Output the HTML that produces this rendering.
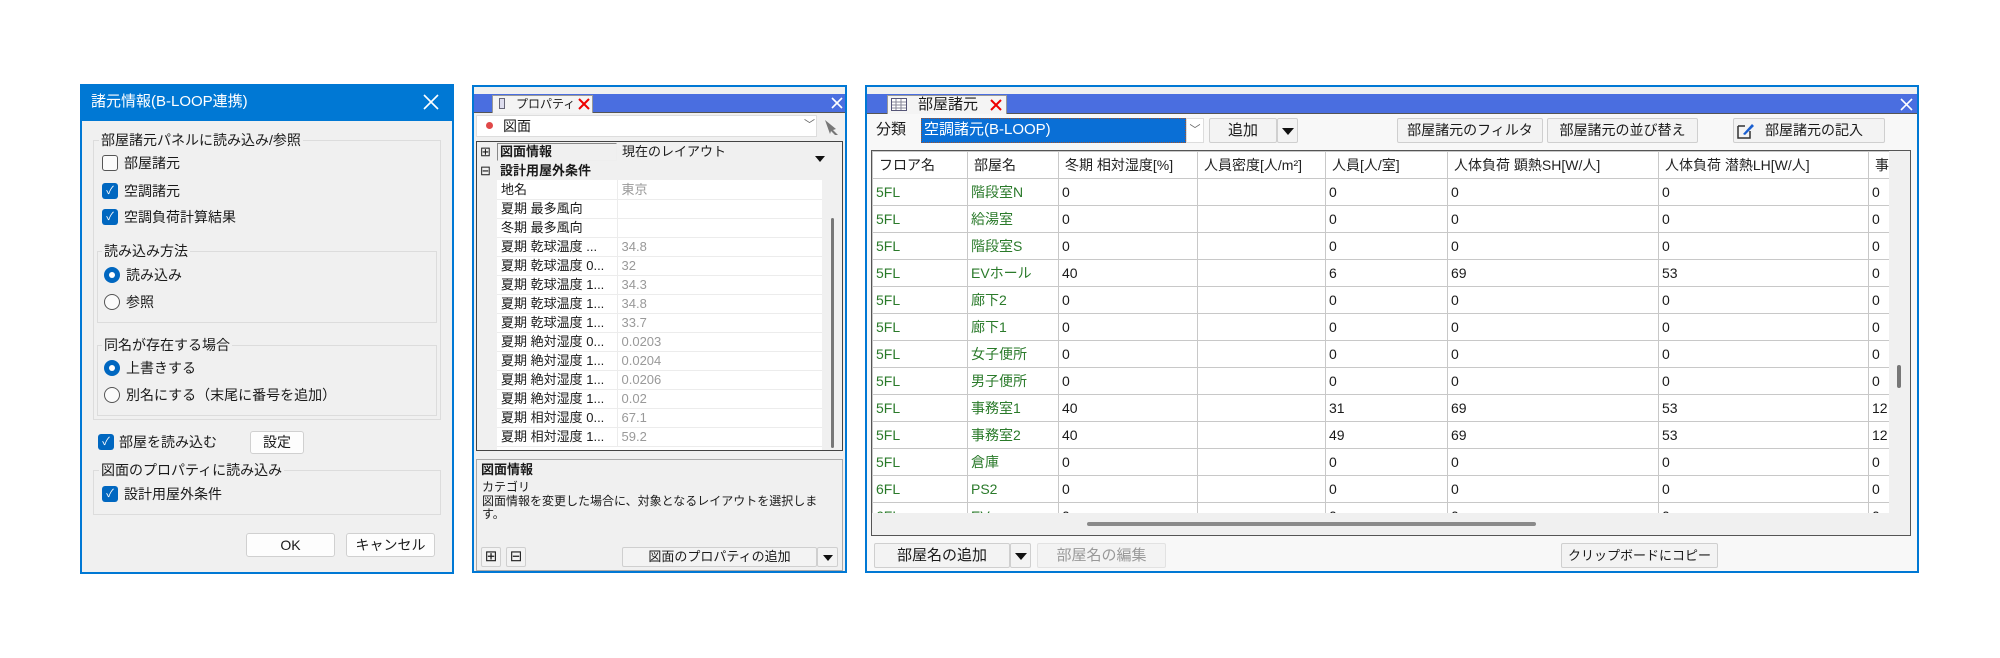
<!DOCTYPE html>
<html><head><meta charset="utf-8"><style>
*{box-sizing:border-box;margin:0;padding:0}
body{width:2000px;height:658px;background:#fff;position:relative;overflow:hidden;font-family:"Liberation Sans","Noto Sans CJK JP",sans-serif;color:#1a1a1a}
.a{position:absolute}
.t{position:absolute;white-space:nowrap;font-size:14px;line-height:16px}
.cb{position:absolute;width:16px;height:16px;border-radius:3px;background:#0067c0;color:#fff;font-size:11px;line-height:16px;text-align:center}
.cbo{position:absolute;width:16px;height:16px;border-radius:3px;border:1px solid #555;background:#fbfbfb}
.rd{position:absolute;width:16px;height:16px;border-radius:50%;background:#0067c0}
.rd::after{content:"";position:absolute;left:5px;top:5px;width:6px;height:6px;border-radius:50%;background:#fff}
.ro{position:absolute;width:16px;height:16px;border-radius:50%;border:1px solid #555;background:#fbfbfb}
.gb{position:absolute;border:1px solid #dcdcdc}
.lbl{position:absolute;background:#f0f0f0;padding:0 2px;font-size:14px;line-height:16px;white-space:nowrap}
.btn{position:absolute;border:1px solid #d0d0d0;background:#fdfdfd;border-radius:3px;font-size:14px;text-align:center;white-space:nowrap}
.wb{position:absolute;border:1px solid #cfcfcf;background:#f3f3f3;border-radius:2px;font-size:14px;text-align:center;white-space:nowrap}
.tri{display:inline-block;width:0;height:0;border-left:6px solid transparent;border-right:6px solid transparent;border-top:7px solid #111}
table{border-collapse:collapse;table-layout:fixed}
.g td{height:27px;border:1px solid #c8c8c8;font-size:14px;padding:0 0 0 3px;white-space:nowrap;overflow:hidden;background:#fff}
.g tr.h td{color:#222;padding-left:6px}
.g td.gr{color:#2a7a2a}
.p td{height:19px;font-size:13px;line-height:15px;padding:0 0 0 4px;white-space:nowrap;overflow:hidden;border-bottom:1px solid #ececec}
</style></head><body>

<!-- Panel 1 -->
<div class="a" style="left:80px;top:84px;width:374px;height:490px;background:#f0f0f0;border:2px solid #0078d4"></div>
<div class="a" style="left:80px;top:84px;width:374px;height:37px;background:#0078d4"></div>
<div class="t" style="left:91px;top:94px;color:#fff;font-size:15px">諸元情報(B-LOOP連携)</div>
<svg class="a" style="left:423px;top:94px" width="16" height="16"><path d="M1 1L15 15M15 1L1 15" stroke="#fff" stroke-width="1.6"/></svg>

<div class="gb" style="left:93px;top:140px;width:348px;height:280px"></div>
<div class="lbl" style="left:99px;top:132px">部屋諸元パネルに読み込み/参照</div>
<div class="cbo" style="left:102px;top:155px"></div><div class="t" style="left:124px;top:155px">部屋諸元</div>
<div class="cb" style="left:102px;top:183px">✓</div><div class="t" style="left:124px;top:183px">空調諸元</div>
<div class="cb" style="left:102px;top:209px">✓</div><div class="t" style="left:124px;top:209px">空調負荷計算結果</div>

<div class="gb" style="left:97px;top:251px;width:340px;height:72px"></div>
<div class="lbl" style="left:102px;top:243px">読み込み方法</div>
<div class="rd" style="left:104px;top:267px"></div><div class="t" style="left:126px;top:267px">読み込み</div>
<div class="ro" style="left:104px;top:294px"></div><div class="t" style="left:126px;top:294px">参照</div>

<div class="gb" style="left:97px;top:345px;width:340px;height:71px"></div>
<div class="lbl" style="left:102px;top:337px">同名が存在する場合</div>
<div class="rd" style="left:104px;top:360px"></div><div class="t" style="left:126px;top:360px">上書きする</div>
<div class="ro" style="left:104px;top:387px"></div><div class="t" style="left:126px;top:387px">別名にする（末尾に番号を追加）</div>

<div class="cb" style="left:98px;top:434px">✓</div><div class="t" style="left:119px;top:434px">部屋を読み込む</div>
<div class="btn" style="left:250px;top:431px;width:54px;height:23px;line-height:21px">設定</div>

<div class="gb" style="left:93px;top:470px;width:348px;height:45px"></div>
<div class="lbl" style="left:99px;top:462px">図面のプロパティに読み込み</div>
<div class="cb" style="left:102px;top:486px">✓</div><div class="t" style="left:124px;top:486px">設計用屋外条件</div>

<div class="btn" style="left:246px;top:533px;width:89px;height:24px;line-height:22px">OK</div>
<div class="btn" style="left:346px;top:533px;width:89px;height:24px;line-height:22px">キャンセル</div>

<!-- Panel 2 -->
<div class="a" style="left:472px;top:85px;width:375px;height:488px;background:#f0f0f0;border:2px solid #0078d4"></div>
<div class="a" style="left:474px;top:94px;width:371px;height:19px;background:#4a6ee0;border-bottom:1px solid #555"></div>
<div class="a" style="left:492px;top:95px;width:101px;height:18px;background:#f4f4f4;border:1px solid #999;border-bottom:none"></div>
<div class="a" style="left:499px;top:98px;width:6px;height:11px;border:1px solid #667;background:#dde"></div>
<div class="t" style="left:516px;top:97px;font-size:12px;line-height:14px">プロパティ</div>
<svg class="a" style="left:578px;top:98px" width="12" height="12"><path d="M1 1L11 11M11 1L1 11" stroke="#e00" stroke-width="2"/></svg>
<svg class="a" style="left:831px;top:97px" width="12" height="12"><path d="M1 1L11 11M11 1L1 11" stroke="#fff" stroke-width="1.6"/></svg>

<div class="a" style="left:476px;top:115px;width:341px;height:22px;background:#fff;border:1px solid #ddd"></div>
<div class="a" style="left:486px;top:122px;width:7px;height:7px;border-radius:50%;background:#e04848"></div>
<div class="t" style="left:503px;top:118px">図面</div>
<div class="t" style="left:804px;top:117px;color:#666;font-size:11px">﹀</div>
<svg class="a" style="left:822px;top:117px" width="20" height="20"><path d="M3 3L14 12L11 13L16 18L13 18L9 14L8 17Z" fill="#777"/></svg>

<div class="a" style="left:476px;top:141px;width:367px;height:310px;border:1px solid #444;background:#f0f0f0;overflow:hidden">
 <div class="a" style="left:20px;top:0;width:325px;height:310px;background:#fff"></div>
 <div class="a" style="left:0;top:0;width:345px;height:38px;background:#f0f0f0"></div>
 <div class="a" style="left:20px;top:1px;width:120px;height:18px;border:1px solid #888;border-right-color:#eee;border-bottom-color:#eee"></div>
 <div class="t" style="left:3px;top:2px;font-size:13px">⊞</div>
 <div class="t" style="left:23px;top:2px;font-size:13px;font-weight:bold">図面情報</div>
 <div class="t" style="left:145px;top:2px;font-size:13px">現在のレイアウト</div>
 <div class="a" style="left:338px;top:7px"><span class="tri" style="border-left-width:5px;border-right-width:5px;border-top-width:6px"></span></div>
 <div class="t" style="left:3px;top:21px;font-size:13px">⊟</div>
 <div class="t" style="left:23px;top:21px;font-size:13px;font-weight:bold">設計用屋外条件</div>
 <table class="p a" style="left:20px;top:38px;width:325px">
 <colgroup><col style="width:120px"><col></colgroup>
 <tr><td style="border-right:1px solid #ececec">地名</td><td style="color:#999">東京</td></tr>
 <tr><td style="border-right:1px solid #ececec">夏期 最多風向</td><td></td></tr>
 <tr><td style="border-right:1px solid #ececec">冬期 最多風向</td><td></td></tr>
 <tr><td style="border-right:1px solid #ececec">夏期 乾球温度 ...</td><td style="color:#999">34.8</td></tr>
 <tr><td style="border-right:1px solid #ececec">夏期 乾球温度 0...</td><td style="color:#999">32</td></tr>
 <tr><td style="border-right:1px solid #ececec">夏期 乾球温度 1...</td><td style="color:#999">34.3</td></tr>
 <tr><td style="border-right:1px solid #ececec">夏期 乾球温度 1...</td><td style="color:#999">34.8</td></tr>
 <tr><td style="border-right:1px solid #ececec">夏期 乾球温度 1...</td><td style="color:#999">33.7</td></tr>
 <tr><td style="border-right:1px solid #ececec">夏期 絶対湿度 0...</td><td style="color:#999">0.0203</td></tr>
 <tr><td style="border-right:1px solid #ececec">夏期 絶対湿度 1...</td><td style="color:#999">0.0204</td></tr>
 <tr><td style="border-right:1px solid #ececec">夏期 絶対湿度 1...</td><td style="color:#999">0.0206</td></tr>
 <tr><td style="border-right:1px solid #ececec">夏期 絶対湿度 1...</td><td style="color:#999">0.02</td></tr>
 <tr><td style="border-right:1px solid #ececec">夏期 相対湿度 0...</td><td style="color:#999">67.1</td></tr>
 <tr><td style="border-right:1px solid #ececec">夏期 相対湿度 1...</td><td style="color:#999">59.2</td></tr>
 </table>
 <div class="a" style="left:354px;top:76px;width:3px;height:230px;background:#777;border-radius:2px"></div>
</div>

<div class="a" style="left:476px;top:459px;width:367px;height:112px;border:1px solid #aaa;background:#f0f0f0"></div>
<div class="t" style="left:481px;top:462px;font-size:13px;font-weight:bold">図面情報</div>
<div class="t" style="left:482px;top:480px;font-size:12px;line-height:14px">カテゴリ</div>
<div class="t" style="left:482px;top:494px;font-size:12px;line-height:14px">図面情報を変更した場合に、対象となるレイアウトを選択しま</div>
<div class="t" style="left:482px;top:507px;font-size:12px;line-height:14px">す。</div>
<div class="wb" style="left:481px;top:547px;width:20px;height:20px;line-height:18px;font-size:15px">⊞</div>
<div class="wb" style="left:506px;top:547px;width:20px;height:20px;line-height:18px;font-size:15px">⊟</div>
<div class="wb" style="left:622px;top:547px;width:195px;height:20px;line-height:18px;font-size:13px">図面のプロパティの追加</div>
<div class="wb" style="left:817px;top:547px;width:21px;height:20px;line-height:16px"><span class="tri" style="border-left-width:5px;border-right-width:5px;border-top-width:6px"></span></div>

<!-- Panel 3 -->
<div class="a" style="left:865px;top:85px;width:1054px;height:488px;background:#f0f0f0;border:2px solid #0078d4"></div>
<div class="a" style="left:867px;top:94px;width:1050px;height:20px;background:#4a6ee0;border-bottom:1px solid #555"></div>
<div class="a" style="left:887px;top:95px;width:120px;height:19px;background:#f4f4f4;border:1px solid #999;border-bottom:none"></div>
<svg class="a" style="left:891px;top:98px" width="16" height="13"><rect x="0.5" y="0.5" width="15" height="12" fill="#fff" stroke="#557"/><path d="M1 4H15M1 7H15M1 10H15M5 1V12M10 1V12" stroke="#889"/></svg>
<div class="t" style="left:918px;top:97px;font-size:15px">部屋諸元</div>
<svg class="a" style="left:990px;top:99px" width="12" height="12"><path d="M1 1L11 11M11 1L1 11" stroke="#e00" stroke-width="2"/></svg>
<svg class="a" style="left:1900px;top:98px" width="13" height="13"><path d="M1 1L12 12M12 1L1 12" stroke="#fff" stroke-width="1.6"/></svg>

<div class="a" style="left:867px;top:114px;width:1050px;height:457px;background:#f8f8f8"></div>
<div class="t" style="left:876px;top:122px;font-size:15px">分類</div>
<div class="a" style="left:921px;top:118px;width:265px;height:25px;background:#0a6fd6;border:1px dotted #a0522d"></div>
<div class="t" style="left:924px;top:122px;color:#fff;font-size:15px">空調諸元(B-LOOP)</div>
<div class="a" style="left:1186px;top:118px;width:18px;height:25px;background:#fff;border:1px solid #ddd;font-size:11px;color:#666;text-align:center;line-height:23px">﹀</div>
<div class="wb" style="left:1209px;top:118px;width:68px;height:25px;line-height:23px;font-size:15px">追加</div>
<div class="wb" style="left:1277px;top:118px;width:21px;height:25px;line-height:22px"><span class="tri"></span></div>
<div class="wb" style="left:1397px;top:118px;width:146px;height:25px;line-height:23px;font-size:14px">部屋諸元のフィルタ</div>
<div class="wb" style="left:1547px;top:118px;width:151px;height:25px;line-height:23px;font-size:14px">部屋諸元の並び替え</div>
<div class="wb" style="left:1733px;top:118px;width:152px;height:25px;line-height:23px;font-size:14px;padding-left:31px;text-align:left">部屋諸元の記入</div>
<svg class="a" style="left:1736px;top:120px" width="20" height="20"><path d="M2 6H9M2 6V18H14V11" fill="none" stroke="#333" stroke-width="1.5"/><path d="M7 14L16 4L18 6L9 15Z" fill="#1a5fd0"/></svg>

<div class="a" style="left:871px;top:150px;width:1040px;height:386px;border:1px solid #555;background:#f0f0f0;overflow:hidden">
 <div class="a" style="left:0;top:0;width:1017px;height:362px;overflow:hidden;background:#fff">
 <table class="g" style="width:1060px">
 <colgroup><col style="width:95px"><col style="width:91px"><col style="width:139px"><col style="width:128px"><col style="width:122px"><col style="width:211px"><col style="width:210px"><col style="width:64px"></colgroup>
 <tr class="h"><td>フロア名</td><td>部屋名</td><td>冬期 相対湿度[%]</td><td>人員密度[人/m²]</td><td>人員[人/室]</td><td>人体負荷 顕熱SH[W/人]</td><td>人体負荷 潜熱LH[W/人]</td><td>事</td></tr>
 <tr><td class="gr">5FL</td><td class="gr">階段室N</td><td>0</td><td></td><td>0</td><td>0</td><td>0</td><td>0</td></tr>
 <tr><td class="gr">5FL</td><td class="gr">給湯室</td><td>0</td><td></td><td>0</td><td>0</td><td>0</td><td>0</td></tr>
 <tr><td class="gr">5FL</td><td class="gr">階段室S</td><td>0</td><td></td><td>0</td><td>0</td><td>0</td><td>0</td></tr>
 <tr><td class="gr">5FL</td><td class="gr">EVホール</td><td>40</td><td></td><td>6</td><td>69</td><td>53</td><td>0</td></tr>
 <tr><td class="gr">5FL</td><td class="gr">廊下2</td><td>0</td><td></td><td>0</td><td>0</td><td>0</td><td>0</td></tr>
 <tr><td class="gr">5FL</td><td class="gr">廊下1</td><td>0</td><td></td><td>0</td><td>0</td><td>0</td><td>0</td></tr>
 <tr><td class="gr">5FL</td><td class="gr">女子便所</td><td>0</td><td></td><td>0</td><td>0</td><td>0</td><td>0</td></tr>
 <tr><td class="gr">5FL</td><td class="gr">男子便所</td><td>0</td><td></td><td>0</td><td>0</td><td>0</td><td>0</td></tr>
 <tr><td class="gr">5FL</td><td class="gr">事務室1</td><td>40</td><td></td><td>31</td><td>69</td><td>53</td><td>12</td></tr>
 <tr><td class="gr">5FL</td><td class="gr">事務室2</td><td>40</td><td></td><td>49</td><td>69</td><td>53</td><td>12</td></tr>
 <tr><td class="gr">5FL</td><td class="gr">倉庫</td><td>0</td><td></td><td>0</td><td>0</td><td>0</td><td>0</td></tr>
 <tr><td class="gr">6FL</td><td class="gr">PS2</td><td>0</td><td></td><td>0</td><td>0</td><td>0</td><td>0</td></tr>
 <tr><td class="gr">6FL</td><td class="gr">EV</td><td>0</td><td></td><td>0</td><td>0</td><td>0</td><td>0</td></tr>
 </table>
 </div>
 <div class="a" style="left:1025px;top:214px;width:4px;height:23px;background:#777;border-radius:2px"></div>
 <div class="a" style="left:215px;top:371px;width:449px;height:4px;background:#8a8a8a;border-radius:2px"></div>
</div>

<div class="wb" style="left:874px;top:543px;width:136px;height:25px;line-height:23px;font-size:15px">部屋名の追加</div>
<div class="wb" style="left:1010px;top:543px;width:21px;height:25px;line-height:22px"><span class="tri"></span></div>
<div class="wb" style="left:1037px;top:543px;width:129px;height:25px;line-height:23px;font-size:15px;color:#999;border-color:#e2e2e2">部屋名の編集</div>
<div class="wb" style="left:1561px;top:543px;width:157px;height:25px;line-height:23px;font-size:13px">クリップボードにコピー</div>

</body></html>
